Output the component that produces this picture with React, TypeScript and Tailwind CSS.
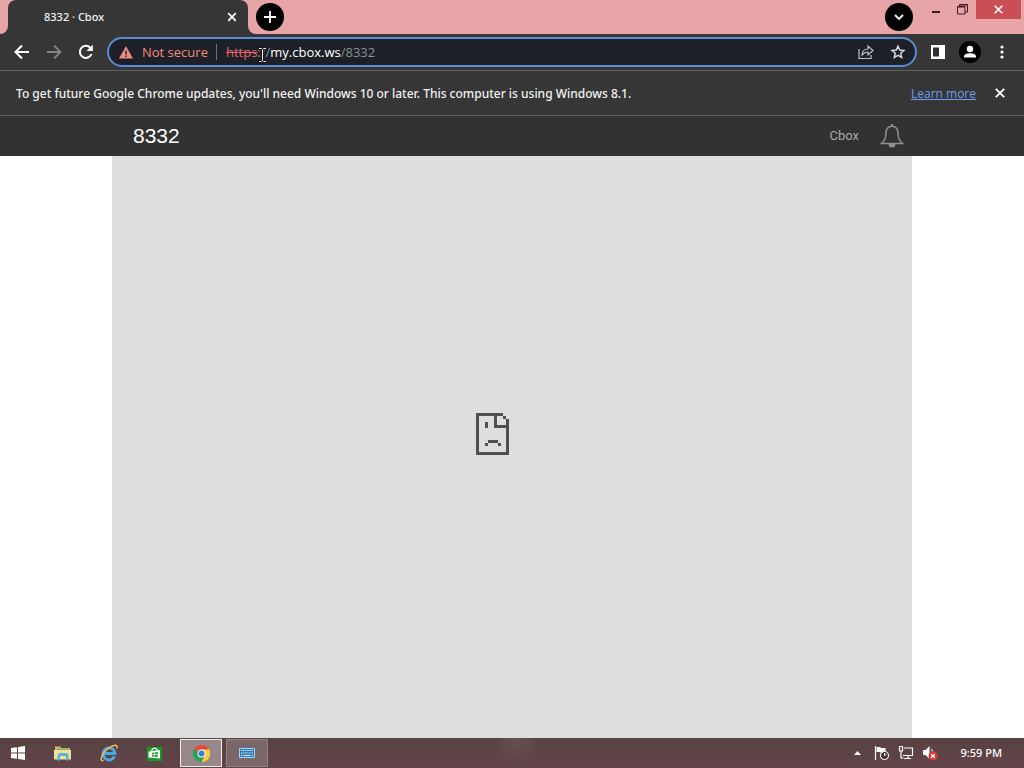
import React from "react";

function TitleBar() {
  return (
    <header className="flex h-[34px] shrink-0 bg-[#363636]">
      <div className="w-2 rounded-br-lg bg-[#e8a5a8]" />
      <div className="w-60 bg-[#e8a5a8]">
        <div className="flex h-full items-center justify-between rounded-t-lg bg-[#363636] pr-2 pl-9">
          <span className="font-['Noto_Sans',sans-serif] text-[11px] font-medium text-[#f1f1f1]">8332 · Cbox</span>
          <button aria-label="Close tab" className="flex size-4 items-center justify-center">
            <svg viewBox="0 0 10 10" className="size-2.5" stroke="#fff" strokeWidth="1.7">
              <path d="M1.2 1.2 8.8 8.8M8.8 1.2 1.2 8.8" />
            </svg>
          </button>
        </div>
      </div>
      <div className="flex flex-1 items-start rounded-bl-lg bg-[#e8a5a8] pl-2">
        <button aria-label="New tab" className="mt-[3px] flex size-7 items-center justify-center rounded-full bg-black">
          <svg viewBox="0 0 12 12" className="size-3" stroke="#fff" strokeWidth="1.8">
            <path d="M6 0v12M0 6h12" />
          </svg>
        </button>
        <button aria-label="Search tabs" className="mt-[3px] ml-auto flex size-7 items-center justify-center rounded-full bg-black">
          <svg viewBox="0 0 10 10" className="size-2.5" fill="none" stroke="#fff" strokeWidth="1.8">
            <path d="M1 3l4 4 4-4" />
          </svg>
        </button>
        <button aria-label="Minimize" className="ml-[10px] flex h-[22px] w-[26px] items-center justify-center">
          <svg viewBox="0 0 8 8" className="size-2" fill="#3d1c1c">
            <path d="M0 4h8v2H0z" />
          </svg>
        </button>
        <button aria-label="Restore" className="mr-px flex h-[19px] w-[26px] items-center justify-center">
          <svg viewBox="0 0 11 11" className="size-[11px]" fill="none" stroke="#3d1c1c">
            <path d="M.5 3h7M.5 2.5h7.500v7.500H.5zM2.500 2.500V.5h8v7.500H8M2.500 1h8" />
          </svg>
        </button>
        <button aria-label="Close" className="mr-[3px] flex h-[19px] w-[45px] items-center justify-center bg-[#c85055]">
          <svg viewBox="0 0 9 9" className="size-[9px]" stroke="#fff" strokeWidth="1.6">
            <path d="M.7.7l7.600 7.600M8.300.7.7 8.300" />
          </svg>
        </button>
      </div>
    </header>
  );
}

function Toolbar() {
  return (
    <nav className="flex h-[37px] shrink-0 items-center border-b border-[#606366] bg-[#363636] pr-[14px] pl-[14px]">
      <div className="flex gap-4">
        <button aria-label="Back">
          <svg viewBox="0 0 16 16" className="size-4" fill="none" stroke="#fff" strokeWidth="2">
            <path d="M15 8H2M8 1.500 1.500 8 8 14.500" />
          </svg>
        </button>
        <button aria-label="Forward">
          <svg viewBox="0 0 16 16" className="size-4" fill="none" stroke="#858585" strokeWidth="1.8">
            <path d="M1 8h13M8 1.500 14.500 8 8 14.500" />
          </svg>
        </button>
        <button aria-label="Reload">
          <svg viewBox="0 0 16 16" className="size-4" fill="none" stroke="#fff" strokeWidth="2">
            <path d="M13.500 10A6 6 0 1 1 12.300 3.800L14 5.600" />
            <path d="M14.800.7v6.300H8.500z" fill="#fff" stroke="none" />
          </svg>
        </button>
      </div>
      <div className="ml-[13px] flex h-[30px] min-w-0 flex-1 items-center rounded-full border-2 border-[#5b8ad8] bg-[#1d2026] pr-[9px] pl-[10px] text-[13px]">
        <svg viewBox="0 0 14 13" className="w-[14px] shrink-0" aria-hidden="true">
          <path d="M7 .3 14 12.500H0z" fill="#f28b82" />
          <path d="M6.300 4.500h1.400v4H6.300zM6.300 9.600h1.400v1.400H6.300z" fill="#1d2026" />
        </svg>
        <button className="ml-[9px] shrink-0 pt-px text-[#f28b82]">Not secure</button>
        <span className="ml-2 h-4 w-px shrink-0 bg-[#6b6e73]" />
        <label htmlFor="address" className="relative ml-[9px] shrink-0 pt-px text-[#8b8f94]">
          <span className="text-[#e0606c] line-through">https</span>://<span className="font-medium text-white">my.cbox.ws</span>/8332
          <svg viewBox="0 0 9 16" className="absolute top-[5px] left-8 h-4 w-[9px]" fill="none" aria-hidden="true">
            <path d="M1 1.500h2.500l1 1 1-1H8M4.500 2.500v11M1 14.500h2.500l1-1 1 1H8" stroke="#111" strokeWidth="2.400" />
            <path d="M1 1.500h2.500l1 1 1-1H8M4.500 2.500v11M1 14.500h2.500l1-1 1 1H8" stroke="#eee" />
          </svg>
        </label>
        <input id="address" type="text" className="min-w-0 flex-1 bg-transparent text-white outline-none" />
        <div className="flex shrink-0 gap-4">
          <button aria-label="Share">
            <svg viewBox="0 0 16 16" className="size-4" fill="none" stroke="#bfc2c6" strokeWidth="1.200">
              <path d="M1 5v9.500h12V11M4 11c.3-4 2.500-6 6-6V2l5 4.500-5 4.500V8C7.500 8 5.700 9 4 11z" />
            </svg>
          </button>
          <button aria-label="Bookmark">
            <svg viewBox="0 0 16 16" className="size-4" fill="none" stroke="#d5d7da" strokeWidth="1.500">
              <path d="M8 2.200l1.700 3.900 4.200.4-3.200 2.800 1 4.200L8 11.300l-3.700 2.200 1-4.200-3.200-2.800 4.200-.4z" />
            </svg>
          </button>
        </div>
      </div>
      <button aria-label="Side panel" className="ml-[14px]">
        <svg viewBox="0 0 14 14" className="size-[14px]">
          <path d="M0 0h14v14H0z" fill="#fff" />
          <path d="M2 2.500h6v9H2z" fill="#303030" />
        </svg>
      </button>
      <button aria-label="Profile" className="ml-[14px]">
        <svg viewBox="0 0 22 22" className="size-[22px]">
          <circle cx="11" cy="11" r="11" fill="#000" />
          <circle cx="11" cy="8" r="3.200" fill="#fff" />
          <path d="M5 16.500v-1c0-2.300 3-3.300 6-3.300s6 1 6 3.300v1z" fill="#fff" />
        </svg>
      </button>
      <button aria-label="Menu" className="ml-[13px]">
        <svg viewBox="0 0 16 16" className="size-4" fill="#fff">
          <circle cx="8" cy="3" r="1.600" />
          <circle cx="8" cy="8" r="1.600" />
          <circle cx="8" cy="13" r="1.600" />
        </svg>
      </button>
    </nav>
  );
}

function InfoBar() {
  return (
    <div className="flex h-[45px] shrink-0 items-center border-b border-[#606060] bg-[#363636] pr-[19px] pl-4 text-xs text-[#f1f1f1]">
      <p className="flex-1 pt-px font-['Noto_Sans',sans-serif] font-medium">
        To get future Google Chrome updates, you'll need Windows 10 or later. This computer is using Windows 8.1.
      </p>
      <a href="#learn" className="pt-px text-[#6f9ff0] underline">Learn more</a>
      <button aria-label="Dismiss" className="ml-[19px]">
        <svg viewBox="0 0 10 10" className="size-[10px]" stroke="#fff" strokeWidth="1.900">
          <path d="M.8.8l8.400 8.400M9.200.8.8 9.200" />
        </svg>
      </button>
    </div>
  );
}

function Page() {
  return (
    <>
      <div className="h-10 shrink-0 bg-[#323232] font-[Roboto,sans-serif]">
        <div className="mx-auto flex h-full max-w-[800px] items-center pr-2 pl-[21px]">
          <h1 className="flex-1 font-['Liberation_Sans',sans-serif] text-[21px] text-white">8332</h1>
          <a href="#cbox" className="text-[13px] text-[#aaa]">Cbox</a>
          <button aria-label="Notifications" className="ml-[21px]">
            <svg viewBox="0 0 24 24" className="size-6" fill="none" stroke="#909090" strokeWidth="1.500">
              <path d="M12 2.200c-4 0-6 3-6 6.800 0 5.500-1.500 8-4.500 10.500h21C19.500 17 18 14.500 18 9c0-3.800-2-6.800-6-6.800z" />
              <path d="M11 0h2v2h-2zM8.500 20h7a3.500 3.500 0 0 1-7 0z" fill="#909090" stroke="none" />
            </svg>
          </button>
        </div>
      </div>
      <main className="flex flex-1 bg-white">
        <div className="mx-auto flex w-full max-w-[800px] items-center justify-center bg-[#dedede] pr-[39px] pb-[26px]">
          <svg viewBox="0 0 33 42" className="h-[42px] w-[33px]" fill="#505050" shapeRendering="crispEdges" role="img" aria-label="Page failed to load">
            <path d="M0 0h27v3H3v36h27V15H18V3h3v9h9V6h3v36H0zM27 3h3v3h-3zM9 9h3v6H9zM12 27h10v3H12zM9 30h3v3H9zM22 30h3v3h-3z" />
          </svg>
        </div>
      </main>
    </>
  );
}

function TaskBar() {
  return (
    <footer className="flex h-[30px] shrink-0 items-center bg-[radial-gradient(ellipse_24px_26px_at_517px_0px,#675250,transparent),linear-gradient(#594244,#624447)] pr-[22px] text-xs text-white">
      <button aria-label="Start" className="ml-[11px]">
        <svg viewBox="0 0 14 14" className="size-[14px]" fill="#fff">
          <path d="M0 2l6-.8v5.300H0zM7 1l7-1v6.500H7zM0 7.500h6v5.300L0 12zM7 7.500h7V14l-7-1z" />
        </svg>
      </button>
      <button aria-label="File Explorer" className="ml-[29px]">
        <svg viewBox="0 0 18 16" className="h-4 w-[18px]">
          <path d="M1 1.500h5l1.500 1.500H16v11H1z" fill="#d9b762" />
          <path d="M3 3.500h12V6H3z" fill="#79b66b" />
          <path d="M0 5h17v9.500H0z" fill="#f3df99" />
          <path d="M3.500 15.500V11q0-3 3-3h5q3 0 3 3v4.500h-2.500V12q0-1-1-1H7q-1 0-1 1v3.500z" fill="#54b6d9" />
        </svg>
      </button>
      <button aria-label="Internet Explorer" className="ml-7">
        <svg viewBox="0 0 18 18" className="size-[18px]" fill="none">
          <path d="M14.500 12.400A6 6 0 1 1 15 9.500H4" stroke="#4aa7e8" strokeWidth="2.800" />
          <path d="M3.500 16.500C0 17.500.5 13 4 8.500S14 .3 16.500 1.500c1 .6.600 2 0 3" stroke="#edc547" strokeWidth="1.400" />
        </svg>
      </button>
      <button aria-label="Store" className="ml-[29px]">
        <svg viewBox="0 0 15 15" className="size-[15px]">
          <path d="M0 1h15v14H0z" fill="#149b24" />
          <path d="M1.500 5.500 13 4v8.500L1.500 11.500z" fill="#fff" />
          <path d="M5 5V3.500Q7.500.8 10 3.500v1" stroke="#fff" strokeWidth="1.200" fill="none" />
          <path d="M5 6.700l2-.2v1.700H5zM7.700 6.400l3-.4v2.200h-3zM5 8.900h2v1.700l-2-.2zM7.700 8.900h3v2.100l-3-.3z" fill="#149b24" />
        </svg>
      </button>
      <button aria-label="Google Chrome" className="ml-[18px] flex h-7 w-[42px] items-center justify-center border border-[#eee] bg-[#98888b]">
        <svg viewBox="0 0 18 18" className="size-[17px]">
          <path d="M9 9 1.210 4.500A9 9 0 0 1 16.790 4.500z" fill="#e64a3b" />
          <path d="M9 9 16.790 4.500A9 9 0 0 1 9 18z" fill="#fccd3c" />
          <path d="M9 9v9A9 9 0 0 1 1.210 4.500z" fill="#2ca451" />
          <path d="M9 4.800h7.950A9 9 0 0 1 9 18l3.640-6.900z" fill="#fccd3c" />
          <path d="M5.360 11.100 1.210 4.500A9 9 0 0 0 9 18l3.640-6.900z" fill="#2ca451" />
          <circle cx="9" cy="9" r="4.200" fill="#fff" />
          <circle cx="9" cy="9" r="3.200" fill="#3b78d8" />
        </svg>
      </button>
      <button aria-label="On-screen keyboard" className="ml-1 flex h-7 w-[42px] items-center justify-center border border-[#918184] bg-[#7b676a]">
        <svg viewBox="0 0 16 10" className="h-[10px] w-4">
          <path d="M.5.5h15v9H.5z" fill="#277bc0" stroke="#a8d4f0" />
          <path d="M2 2.500h12M2 5h12" stroke="#e8f5ff" strokeDasharray="1.300 .8" />
          <path d="M2 7.500h1.300M4.500 7.500h7M12.700 7.500H14" stroke="#e8f5ff" />
        </svg>
      </button>
      <button aria-label="Show hidden icons" className="ml-auto">
        <svg viewBox="0 0 7 4" className="h-1 w-[7px]" fill="#fff"><path d="M3.500 0 7 4H0z" /></svg>
      </button>
      <button aria-label="Action Center" className="ml-[13px]">
        <svg viewBox="0 0 16 16" className="size-4" fill="none">
          <path d="M1.500 1v14" stroke="#fff" strokeWidth="1.200" />
          <path d="M2.500 2H6l1 1h4.500v5H7L6 7H2.500z" fill="#fff" />
          <circle cx="10.500" cy="10.500" r="4" fill="#3d2e30" stroke="#eee" strokeWidth="1.200" />
          <path d="M10.500 8v2.500l2-1" stroke="#fff" />
        </svg>
      </button>
      <button aria-label="Network" className="ml-2">
        <svg viewBox="0 0 16 16" className="size-4" fill="none" stroke="#fff" strokeWidth="1.200">
          <path d="M6 3h8.500v7.500H5M10 10.500V13M6 13.500h7" />
          <path d="M1.500 1.500h3V6h-3zM3 6v7h2.500" />
        </svg>
      </button>
      <button aria-label="Volume muted" className="ml-2">
        <svg viewBox="0 0 16 16" className="size-4">
          <path d="M1 5h2.500L7.500 1v13L3.500 10H1z" fill="#fff" />
          <path d="M9.500 4q1.500 2 0 5" fill="none" stroke="#fff" />
          <circle cx="11" cy="11" r="4.500" fill="#d83b35" />
          <path d="M9.200 9.200l3.600 3.600M12.800 9.200l-3.600 3.600" stroke="#fff" strokeWidth="1.400" />
        </svg>
      </button>
      <time className="ml-[22px] pt-px font-['Noto_Sans',sans-serif] text-[11px] font-medium">9:59 PM</time>
    </footer>
  );
}

export default function App() {
  return (
    <div className="flex min-h-screen flex-col font-['Open_Sans','Noto_Sans',sans-serif]">
      <TitleBar />
      <Toolbar />
      <InfoBar />
      <Page />
      <TaskBar />
    </div>
  );
}
